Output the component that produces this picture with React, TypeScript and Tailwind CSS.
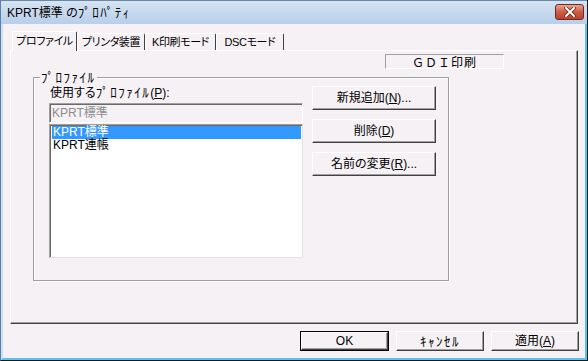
import React from 'react';

const raised =
  'border border-t-white border-l-white border-r-[#404040] border-b-[#404040] shadow-[inset_-1px_-1px_0_#a0a0a0]';
const sunken =
  'border border-t-[#a0a0a0] border-l-[#a0a0a0] border-r-white border-b-white shadow-[inset_1px_1px_0_#696969]';

// half-width katakana are drawn wider in the original UI font
function Hw({ children }: { children: React.ReactNode }) {
  return <span className="text-[13px] tracking-[1.5px]">{children}</span>;
}

function Btn({ children, className = '' }: { children: React.ReactNode; className?: string }) {
  return (
    <div className={`${raised} bg-[#f5f1f5] flex items-center justify-center whitespace-nowrap text-[12px] leading-none ${className}`}>
      {children}
    </div>
  );
}

function Tab({ label, active, w }: { label: string; active?: boolean; w: string }) {
  return (
    <div
      className={`${w} flex items-center justify-center whitespace-nowrap text-[11px] tracking-[-0.4px] leading-none border-t border-l border-t-white border-l-white border-r border-r-[#404040] rounded-t-[2px] bg-[#f5f1f5] ${
        active ? 'h-[20px] -mb-px relative z-10 pb-[1px]' : 'h-[17px]'
      }`}
    >
      {label}
    </div>
  );
}

export default function App() {
  return (
    <div className="w-[588px] h-[361px] flex flex-col border-l border-r border-b border-l-[#5b7fa8] border-r-[#1b1b1b] border-b-[#1b1b1b] font-['Liberation_Sans','Noto_Sans_CJK_JP',sans-serif] [font-feature-settings:'palt'] text-black bg-[#f5f1f5]">
      {/* title bar */}
      <div className="h-[24px] shrink-0 flex items-center pl-[6px] pr-[3px] bg-gradient-to-b from-[#d6e3f2] to-[#b7cfea] border-t border-t-[#6d87a8]">
        <span className="text-[12px] leading-none whitespace-nowrap">
          KPRT標準 の<Hw>ﾌﾟﾛﾊﾟﾃｨ</Hw>
        </span>
        <div className="ml-auto w-[29px] h-[16px] rounded-[3px] border border-[#6b2a22] bg-gradient-to-b from-[#e6a593] via-[#cf5a43] to-[#c0412b] flex items-center justify-center mb-[2px]">
          <svg width="12" height="10" viewBox="0 0 12 10">
            <path d="M2 1 L10 9 M10 1 L2 9" stroke="#5a1c14" strokeWidth="3.4" strokeLinecap="square" />
            <path d="M2 1 L10 9 M10 1 L2 9" stroke="#ffffff" strokeWidth="2" strokeLinecap="square" />
          </svg>
        </div>
      </div>

      {/* content */}
      <div className="flex-1 flex flex-col border-l-2 border-r-2 border-b-2 border-l-[#cfe0f2] border-r-[#55c4ee] border-b-[#55c4ee]">
        <div className="pt-[7px] pl-[9px] h-[26px] flex items-end">
          <Tab label="プロファイル" active w="w-[65px]" />
          <Tab label="プリンタ装置" w="w-[68px]" />
          <Tab label="K印刷モード" w="w-[71px]" />
          <Tab label="DSCモード" w="w-[68px]" />
        </div>

        {/* tab panel */}
        <div className={`${raised} ml-[7px] w-[568px] h-[274px] flex flex-col`}>
          <div className="ml-[374px] mt-[3px] w-[119px] h-[15px] border border-t-[#a0a0a0] border-l-[#a0a0a0] border-r-white border-b-white flex items-center justify-center text-[12px] leading-none tracking-[1px] [font-feature-settings:normal] font-['Noto_Sans_CJK_JP',sans-serif]">
            ＧＤＩ印刷
          </div>

          {/* group box */}
          <div className="relative ml-[22px] mt-[8px] w-[416px] h-[204px] border border-[#a0a0a0] shadow-[inset_1px_1px_0_#fff,1px_1px_0_#fff] pl-[15px] pt-[8px] flex">
            <span className="absolute left-[6px] -top-[8px] px-[1px] bg-[#f5f1f5] leading-[14px] whitespace-nowrap">
              <Hw>ﾌﾟﾛﾌｧｲﾙ</Hw>
            </span>
            <div className="w-[254px] flex flex-col">
              <div className="h-[17px] pl-[1px] text-[12px] leading-[14px] whitespace-nowrap">
                使用する<Hw>ﾌﾟﾛﾌｧｲﾙ</Hw>(<span className="underline">P</span>):
              </div>
              <div className={`${sunken} h-[20px] flex items-center pl-[2px] text-[12px] leading-none text-[#8d8d8d]`}>
                KPRT標準
              </div>
              <div className="mt-[1px] h-[134px] border border-t-[#a0a0a0] border-l-[#a0a0a0] border-r-[#e3e3e3] border-b-[#e3e3e3] shadow-[inset_1px_1px_0_#696969] bg-white pt-[1px] pl-[2px] pr-[1px]">
                <div className="h-[13px] bg-[#3399ff] text-white text-[12px] leading-[13px] pl-[1px]">KPRT標準</div>
                <div className="h-[13px] text-[12px] leading-[13px] pl-[1px]">KPRT連帳</div>
              </div>
            </div>
            <div className="ml-[9px] flex flex-col gap-[9px]">
              <Btn className="w-[124px] h-[24px]">
                新規追加(<span className="underline">N</span>)...
              </Btn>
              <Btn className="w-[124px] h-[24px]">
                削除(<span className="underline">D</span>)
              </Btn>
              <Btn className="w-[124px] h-[24px]">
                名前の変更(<span className="underline">R</span>)...
              </Btn>
            </div>
          </div>
        </div>

        {/* bottom buttons */}
        <div className="mt-[7px] flex justify-end gap-[7px] pr-[6px]">
          <div className="border border-black">
            <Btn className="w-[87px] h-[18px]">OK</Btn>
          </div>
          <Btn className="w-[88px] h-[20px]">
            <Hw>ｷｬﾝｾﾙ</Hw>
          </Btn>
          <Btn className="w-[88px] h-[20px]">
            適用(<span className="underline">A</span>)
          </Btn>
        </div>
      </div>
    </div>
  );
}
